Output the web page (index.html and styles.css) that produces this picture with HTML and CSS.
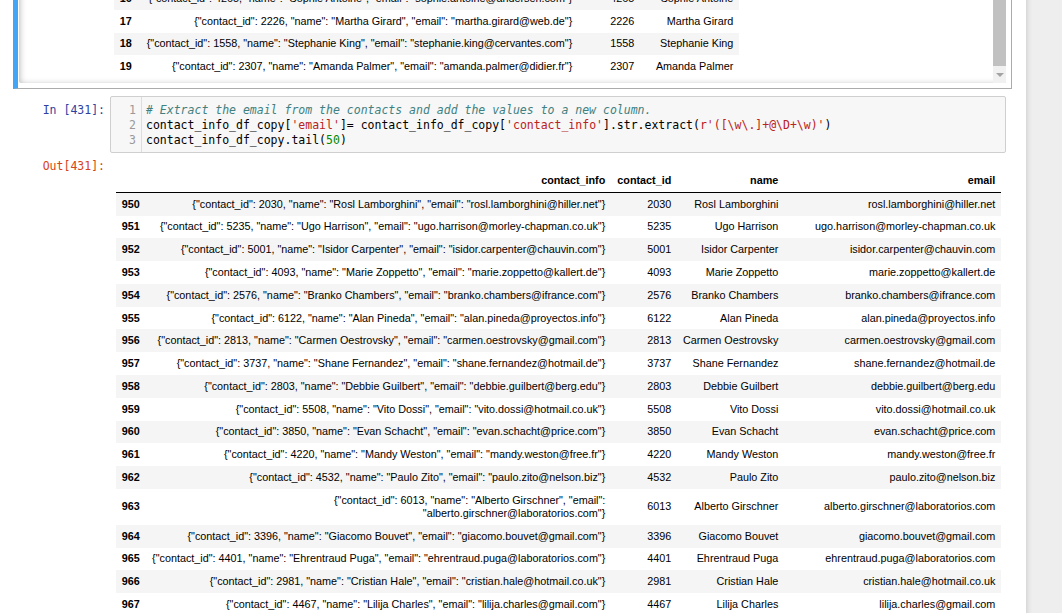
FILE: index.html
```html
<!DOCTYPE html>
<html>
<head>
<meta charset="utf-8">
<link rel="stylesheet" href="styles.css">
</head>
<body>
<div class="notebook">
  <div class="cell selected">
    <div class="out-scroll">
      <div class="scroll-content">
        <table class="df df-top">
          <colgroup><col class="c-idx2"><col class="c-info2"><col class="c-id2"><col class="c-name2"></colgroup>
          <tbody>
            <tr><th>16</th><td>{"contact_id": 4265, "name": "Sophie Antoine", "email": "sophie.antoine@andersen.com"}</td><td>4265</td><td>Sophie Antoine</td></tr>
            <tr><th>17</th><td>{"contact_id": 2226, "name": "Martha Girard", "email": "martha.girard@web.de"}</td><td>2226</td><td>Martha Girard</td></tr>
            <tr><th>18</th><td>{"contact_id": 1558, "name": "Stephanie King", "email": "stephanie.king@cervantes.com"}</td><td>1558</td><td>Stephanie King</td></tr>
            <tr><th>19</th><td>{"contact_id": 2307, "name": "Amanda Palmer", "email": "amanda.palmer@didier.fr"}</td><td>2307</td><td>Amanda Palmer</td></tr>
          </tbody>
        </table>
      </div>
      <div class="vscroll">
        <div class="thumb"></div>
        <div class="arrow"><span class="tri"></span></div>
      </div>
    </div>
  </div>

  <div class="cell code-cell">
    <div class="input">
      <div class="prompt in-prompt">In&nbsp;[431]:</div>
      <div class="code">
        <div class="gutter"><div>1</div><div>2</div><div>3</div></div>
        <div class="lines">
          <div class="ln"><span class="cm"># Extract the email from the contacts and add the values to a new column.</span></div>
          <div class="ln">contact_info_df_copy[<span class="st">'email'</span>]= contact_info_df_copy[<span class="st">'contact_info'</span>].str.extract(<span class="st">r'([\w\.]+@\D+\w)'</span>)</div>
          <div class="ln">contact_info_df_copy.tail(<span class="nu">50</span>)</div>
        </div>
      </div>
    </div>
    <div class="output">
      <div class="prompt out-prompt">Out[431]:</div>
      <div class="out-sub">
        <table class="df df-main">
          <colgroup><col class="c-idx"><col class="c-info"><col class="c-id"><col class="c-name"><col class="c-email"></colgroup>
          <thead>
            <tr><th></th><th>contact_info</th><th>contact_id</th><th>name</th><th>email</th></tr>
          </thead>
          <tbody>
            <tr><th>950</th><td>{"contact_id": 2030, "name": "Rosl Lamborghini", "email": "rosl.lamborghini@hiller.net"}</td><td>2030</td><td>Rosl Lamborghini</td><td>rosl.lamborghini@hiller.net</td></tr>
            <tr><th>951</th><td>{"contact_id": 5235, "name": "Ugo Harrison", "email": "ugo.harrison@morley-chapman.co.uk"}</td><td>5235</td><td>Ugo Harrison</td><td>ugo.harrison@morley-chapman.co.uk</td></tr>
            <tr><th>952</th><td>{"contact_id": 5001, "name": "Isidor Carpenter", "email": "isidor.carpenter@chauvin.com"}</td><td>5001</td><td>Isidor Carpenter</td><td>isidor.carpenter@chauvin.com</td></tr>
            <tr><th>953</th><td>{"contact_id": 4093, "name": "Marie Zoppetto", "email": "marie.zoppetto@kallert.de"}</td><td>4093</td><td>Marie Zoppetto</td><td>marie.zoppetto@kallert.de</td></tr>
            <tr><th>954</th><td>{"contact_id": 2576, "name": "Branko Chambers", "email": "branko.chambers@ifrance.com"}</td><td>2576</td><td>Branko Chambers</td><td>branko.chambers@ifrance.com</td></tr>
            <tr><th>955</th><td>{"contact_id": 6122, "name": "Alan Pineda", "email": "alan.pineda@proyectos.info"}</td><td>6122</td><td>Alan Pineda</td><td>alan.pineda@proyectos.info</td></tr>
            <tr><th>956</th><td>{"contact_id": 2813, "name": "Carmen Oestrovsky", "email": "carmen.oestrovsky@gmail.com"}</td><td>2813</td><td>Carmen Oestrovsky</td><td>carmen.oestrovsky@gmail.com</td></tr>
            <tr><th>957</th><td>{"contact_id": 3737, "name": "Shane Fernandez", "email": "shane.fernandez@hotmail.de"}</td><td>3737</td><td>Shane Fernandez</td><td>shane.fernandez@hotmail.de</td></tr>
            <tr><th>958</th><td>{"contact_id": 2803, "name": "Debbie Guilbert", "email": "debbie.guilbert@berg.edu"}</td><td>2803</td><td>Debbie Guilbert</td><td>debbie.guilbert@berg.edu</td></tr>
            <tr><th>959</th><td>{"contact_id": 5508, "name": "Vito Dossi", "email": "vito.dossi@hotmail.co.uk"}</td><td>5508</td><td>Vito Dossi</td><td>vito.dossi@hotmail.co.uk</td></tr>
            <tr><th>960</th><td>{"contact_id": 3850, "name": "Evan Schacht", "email": "evan.schacht@price.com"}</td><td>3850</td><td>Evan Schacht</td><td>evan.schacht@price.com</td></tr>
            <tr><th>961</th><td>{"contact_id": 4220, "name": "Mandy Weston", "email": "mandy.weston@free.fr"}</td><td>4220</td><td>Mandy Weston</td><td>mandy.weston@free.fr</td></tr>
            <tr><th>962</th><td>{"contact_id": 4532, "name": "Paulo Zito", "email": "paulo.zito@nelson.biz"}</td><td>4532</td><td>Paulo Zito</td><td>paulo.zito@nelson.biz</td></tr>
            <tr><th>963</th><td>{"contact_id": 6013, "name": "Alberto Girschner", "email":<br>"alberto.girschner@laboratorios.com"}</td><td>6013</td><td>Alberto Girschner</td><td>alberto.girschner@laboratorios.com</td></tr>
            <tr><th>964</th><td>{"contact_id": 3396, "name": "Giacomo Bouvet", "email": "giacomo.bouvet@gmail.com"}</td><td>3396</td><td>Giacomo Bouvet</td><td>giacomo.bouvet@gmail.com</td></tr>
            <tr><th>965</th><td>{"contact_id": 4401, "name": "Ehrentraud Puga", "email": "ehrentraud.puga@laboratorios.com"}</td><td>4401</td><td>Ehrentraud Puga</td><td>ehrentraud.puga@laboratorios.com</td></tr>
            <tr><th>966</th><td>{"contact_id": 2981, "name": "Cristian Hale", "email": "cristian.hale@hotmail.co.uk"}</td><td>2981</td><td>Cristian Hale</td><td>cristian.hale@hotmail.co.uk</td></tr>
            <tr><th>967</th><td>{"contact_id": 4467, "name": "Lilija Charles", "email": "lilija.charles@gmail.com"}</td><td>4467</td><td>Lilija Charles</td><td>lilija.charles@gmail.com</td></tr>
          </tbody>
        </table>
      </div>
    </div>
  </div>
</div>
</body>
</html>
```
FILE: styles.css
```css
html, body {
  margin: 0;
  padding: 0;
}
body {
  background: #eeeeee;
  overflow: hidden;
  font-family: "Liberation Sans", Arial, sans-serif;
  color: #000;
}
.notebook {
  width: 1026px;
  box-sizing: border-box;
  min-height: 720px;
  margin-top: -30px;
  padding: 0 14px 0 13px;
  background: #fff;
  box-shadow: 0 0 5px 1px rgba(87, 87, 87, 0.22);
}
.cell {
  border: 1px solid transparent;
  padding: 5px;
}
.cell.selected {
  border-color: #ababab;
  border-left: 5px solid #42a5f5;
  padding-left: 1px;
}
.code-cell {
  padding-top: 6px;
  padding-bottom: 0;
}

/* scrolled output of the previous cell */
.out-scroll {
  height: 107px;
  display: flex;
  overflow: hidden;
  border-radius: 2px;
  box-shadow: inset 0 2px 7px rgba(0, 0, 0, 0.35);
}
.scroll-content {
  flex: 1;
  padding: 11px 0 0 95px;
  overflow: hidden;
}
.vscroll {
  width: 13px;
  display: flex;
  flex-direction: column;
  background: #f1f1f1;
}
.vscroll .thumb {
  flex: 1;
  background: #c1c1c1;
}
.vscroll .arrow {
  height: 17px;
  display: flex;
  align-items: center;
  justify-content: center;
  background: #f1f1f1;
}
.vscroll .tri {
  width: 0;
  height: 0;
  border-left: 4px solid transparent;
  border-right: 4px solid transparent;
  border-top: 4px solid #a3a3a3;
}

/* dataframe tables */
.df {
  border-collapse: collapse;
  border-spacing: 0;
  table-layout: fixed;
  font-size: 10.8px;
  line-height: 13px;
}
.df th, .df td {
  padding: 4.9px 5.7px;
  text-align: right;
  vertical-align: middle;
  white-space: nowrap;
  font-weight: normal;
}
.df th {
  font-weight: bold;
}
.df tbody th {
  text-align: left;
}
.df thead {
  border-bottom: 1px solid #000;
  vertical-align: bottom;
}
.df tbody tr:nth-child(odd) {
  background: #f5f5f5;
}
.df-top { width: 625px; }
.c-idx2 { width: 27px; }
.c-info2 { width: 437px; }
.c-id2 { width: 62px; }
.c-name2 { width: 99px; }

.df-main { width: 100%; margin-top: 11px; }
.c-idx { width: 29px; }
.c-info { width: 466px; }
.c-id { width: 66px; }
.c-name { width: 107px; }
.c-email { width: 217px; }

/* code cell */
.input, .output {
  display: flex;
}
.prompt {
  width: 91px;
  flex: none;
  box-sizing: border-box;
  padding-right: 5px;
  text-align: right;
  font-family: "DejaVu Sans Mono", "Liberation Mono", monospace;
  font-size: 11.5px;
  line-height: 15px;
}
.in-prompt {
  color: #303f9f;
  padding-top: 7px;
}
.out-prompt {
  color: #d84315;
  padding-top: 5.5px;
}
.code {
  flex: 1;
  display: flex;
  border: 1px solid #cfcfcf;
  border-radius: 2px;
  background: #f7f7f7;
  font-family: "DejaVu Sans Mono", "Liberation Mono", monospace;
  font-size: 11.5px;
  line-height: 15px;
}
.gutter {
  width: 31px;
  box-sizing: border-box;
  padding: 6px 5px 4px 0;
  border-right: 1px solid #dddddd;
  text-align: right;
  color: #999999;
}
.lines {
  flex: 1;
  padding: 6px 4px 4px;
  color: #000;
}
.ln {
  white-space: pre;
}
.cm { color: #408080; font-style: italic; }
.st { color: #ba2121; }
.nu { color: #008800; }

.out-sub {
  flex: 1;
  padding: 5px 5px 0 6px;
  min-width: 0;
}
```
